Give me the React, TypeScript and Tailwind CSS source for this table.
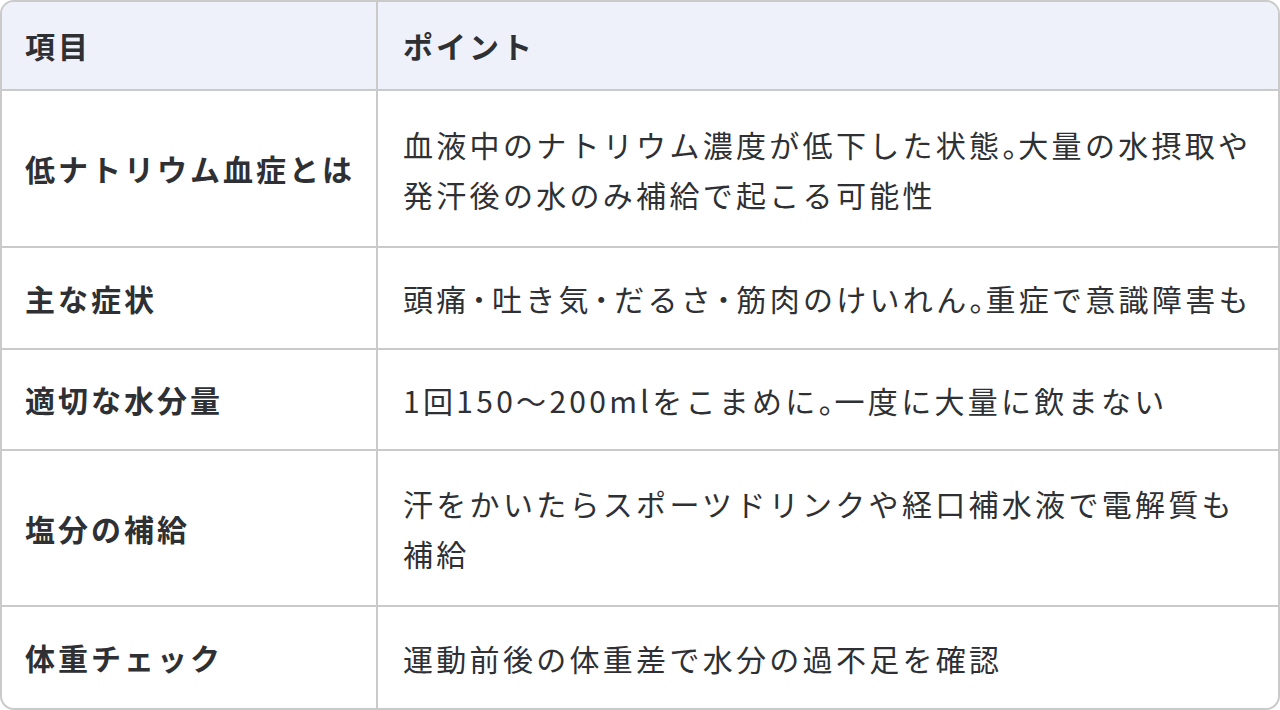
const rows = [
  { h: "h-[157px]", label: "低ナトリウム血症とは", lines: ["血液中のナトリウム濃度が低下した状態。大量の水摂取や", "発汗後の水のみ補給で起こる可能性"] },
  { h: "h-[102px]", label: "主な症状", lines: ["頭痛・吐き気・だるさ・筋肉のけいれん。重症で意識障害も"] },
  { h: "h-[101px]", label: "適切な水分量", lines: ["1回150〜200mlをこまめに。一度に大量に飲まない"] },
  { h: "h-[156px]", label: "塩分の補給", lines: ["汗をかいたらスポーツドリンクや経口補水液で電解質も", "補給"] },
  { h: "h-[101px]", label: "体重チェック", lines: ["運動前後の体重差で水分の過不足を確認"] },
];

// punctuation in the picture is set tighter than full width
function Line({ text }: { text: string }) {
  const parts = text.split(/([。・])/);
  return (
    <span>
      {parts.map((p, i) =>
        p === "。" ? (
          <span key={i} className="tracking-[-0.47em]">。</span>
        ) : p === "・" ? (
          <span key={i} className="px-[2px] font-bold">･</span>
        ) : (
          <span key={i}>{p}</span>
        )
      )}
    </span>
  );
}

export default function App() {
  return (
    <div
      className="w-[1280px] h-[710px] bg-white text-[#2e3034]"
      style={{ fontFamily: '"Noto Sans CJK JP", "Noto Sans", sans-serif' }}
    >
      <div className="h-full border-2 border-[#cacaca] rounded-[14px] overflow-hidden">
        {/* header */}
        <div className="grid grid-cols-[376px_1fr] h-[89px] bg-[#eef1fa] border-b-2 border-[#cacaca]">
          <div className="flex items-center px-[23px] border-r-2 border-[#cacaca] text-[30px] font-bold tracking-[0.1em]">項目</div>
          <div className="flex items-center px-[25px] text-[30px] font-bold tracking-[0.1em]">ポイント</div>
        </div>
        {rows.map((r, i) => (
          <div
            key={r.label}
            className={`grid grid-cols-[376px_1fr] ${r.h} ${i < rows.length - 1 ? "border-b-2 border-[#cacaca]" : ""}`}
          >
            <div className="flex items-center px-[23px] border-r-2 border-[#cacaca] text-[30px] font-bold tracking-[0.1em] whitespace-nowrap">
              {r.label}
            </div>
            <div className="flex flex-col justify-center px-[25px] text-[30px] leading-[50px] tracking-[0.11em] whitespace-nowrap">
              {r.lines.map((l) => (
                <Line key={l} text={l} />
              ))}
            </div>
          </div>
        ))}
      </div>
    </div>
  );
}
